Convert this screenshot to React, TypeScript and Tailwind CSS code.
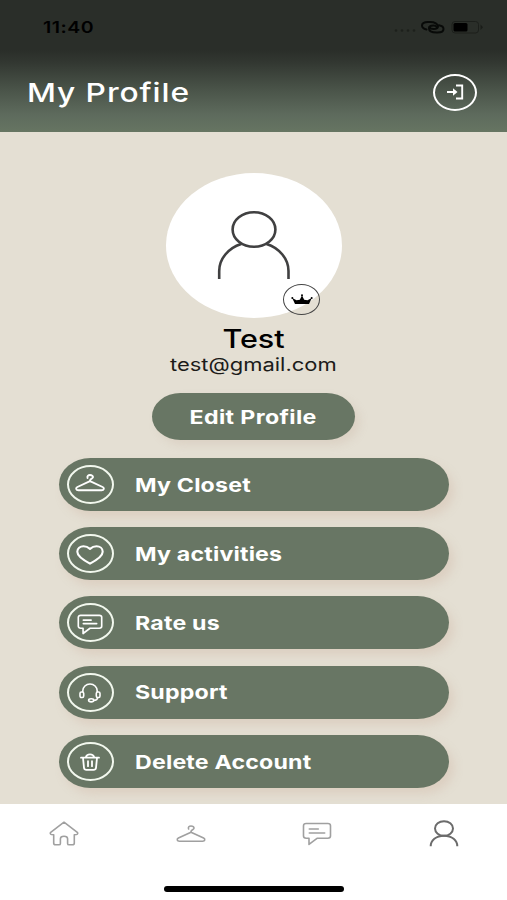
import type { ReactNode } from 'react';

interface IconProps {
  className?: string;
}

interface MenuItem {
  label: string;
  icon: ReactNode;
}

function HangerIcon({ className }: IconProps) {
  return (
    <svg viewBox="0 0 30 18" fill="none" stroke="currentColor" strokeLinecap="round" strokeLinejoin="round" className={className}>
      <path d="M12.600 4C11.800 2.200 13.200 1 15 1c1.900 0 3.100 1 3 2.300-.1 1.300-2.800 1.500-2.900 3v.9" />
      <path d="M15 7.200 27.600 13c1.900 1 1.500 3.200-1 3.200H3.400c-2.500 0-2.900-2.200-1-3.200L15 7.200Z" />
    </svg>
  );
}

function ChatIcon({ className }: IconProps) {
  return (
    <svg viewBox="0 0 30 24" fill="none" stroke="currentColor" strokeLinecap="round" strokeLinejoin="round" className={className}>
      <path d="M4.200 1.500h21.600c1.600 0 2.700.9 2.700 2.200v10.400c0 1.300-1.100 2.200-2.700 2.200H15L7 22.400v-6.100H4.200c-1.600 0-2.700-.9-2.700-2.200V3.700c0-1.300 1.100-2.200 2.700-2.200Z" />
      <path d="M7.300 7h9M7.300 11h15.400" />
    </svg>
  );
}

function HeartIcon({ className }: IconProps) {
  return (
    <svg viewBox="0 0 28 20" fill="none" stroke="currentColor" strokeLinejoin="round" className={className}>
      <path d="M14 18.600C9 16 1.300 12 1.300 6.800 1.300 3.500 4 1.300 7.500 1.300c2.800 0 4.700 1 6.500 2.600 1.800-1.600 3.700-2.600 6.500-2.600 3.500 0 6.200 2.200 6.200 5.500 0 5.200-7.700 9.200-12.700 11.800Z" />
    </svg>
  );
}

function HeadsetIcon({ className }: IconProps) {
  return (
    <svg viewBox="0 0 22 20" fill="none" stroke="currentColor" strokeWidth="1.600" className={className}>
      <path d="M3.800 9V7.800C3.800 4 7 1 11 1s7.200 3 7.200 6.800V9" />
      <rect x="1" y="9" width="3.700" height="5.500" rx="1.400" />
      <rect x="17.300" y="9" width="3.700" height="5.500" rx="1.400" />
      <path d="M18.600 14.500c0 1.900-1.800 2.900-4.200 2.900" />
      <ellipse cx="12.200" cy="17.300" rx="2.600" ry="1.600" />
    </svg>
  );
}

function TrashIcon({ className }: IconProps) {
  return (
    <svg viewBox="0 0 20 18" fill="none" stroke="currentColor" strokeWidth="1.800" strokeLinecap="round" strokeLinejoin="round" className={className}>
      <path d="M1 4.700h18M5.800 4.300C6.300 2.300 7.700 1.300 10 1.300s3.700 1 4.200 3M3 4.900l1 9.900c.2 1.400 1 2 2.500 2h7c1.500 0 2.300-.6 2.500-2l1-9.900M8 8.200v5M12 8.200v5" />
    </svg>
  );
}

function HomeIcon({ className }: IconProps) {
  return (
    <svg viewBox="0 0 30 25" fill="none" stroke="currentColor" strokeLinecap="round" strokeLinejoin="round" className={className}>
      <path d="M15 1.200 1.700 11.300c-.8.800-.5 2 .8 2.200l2.200.2v8.500c0 1 .7 1.600 1.900 1.600h3.300c1 0 1.500-.5 1.500-1.400v-4.600c0-1.800 1.200-2.600 3.600-2.600s3.600.8 3.600 2.600v4.600c0 .9.500 1.400 1.500 1.400h3.300c1.200 0 1.900-.6 1.900-1.600v-8.500l2.200-.2c1.300-.2 1.600-1.400.8-2.200L15 1.200Z" />
    </svg>
  );
}

const menuItems: MenuItem[] = [
  { label: 'My Closet', icon: <HangerIcon className="mb-[3px] h-[18px] w-[30px] stroke-[1.900]" /> },
  { label: 'My activities', icon: <HeartIcon className="mt-[2px] h-5 w-7 stroke-[2.100]" /> },
  { label: 'Rate us', icon: <ChatIcon className="mt-[3px] h-[21px] w-[26px] stroke-[1.900]" /> },
  { label: 'Support', icon: <HeadsetIcon className="mt-px h-5 w-[22px]" /> },
  { label: 'Delete Account', icon: <TrashIcon className="mt-[2px] h-[18px] w-5" /> },
];

function StatusBar() {
  return (
    <div className="flex h-[54px] items-center justify-between pl-[43px] pr-[23px] text-black">
      <span className="origin-left scale-x-[1.22] text-base font-semibold tracking-[0.4px]">11:40</span>
      <svg width="92" height="16" viewBox="0 0 92 16" fill="none">
        <g fill="#1d201c">
          <circle cx="4" cy="11.500" r="1.300" />
          <circle cx="10" cy="11.500" r="1.300" />
          <circle cx="16" cy="11.500" r="1.300" />
          <circle cx="22" cy="11.500" r="1.300" />
        </g>
        <g stroke="#080a08" strokeWidth="2" strokeLinecap="round">
          <path d="M34.500 10.500c-3-.7-4.500-2.400-4.500-4C30 4.300 32.500 3 36 3h2c5 0 8 2 8 4.200 0 1.700-2 2.800-4.500 2.800-2 0-3.500-.8-4-1.800" />
          <path d="M47 6.300c3 .5 4.500 2 4.500 3.700 0 2.200-2.500 3.500-6 3.500h-1c-5 0-7.500-2-7.500-4s2-3.100 4.300-3.100c2 0 3.200.8 3.700 1.800" />
        </g>
        <rect x="60" y="2.500" width="26.500" height="11.500" rx="3" stroke="#1c1f1b" />
        <rect x="61.500" y="4" width="14" height="8.500" rx="1.500" fill="black" />
        <path d="M88.500 5.500v5.500l2.500-2.700Z" fill="#1a1d19" />
      </svg>
    </div>
  );
}

function Header() {
  return (
    <header className="h-[132px] bg-[linear-gradient(to_bottom,#2a2e29_0px,#2a2e29_50px,#323731_62px,#4b554a_91px,#5e6b5d_115px,#667562_132px)]">
      <StatusBar />
      <div className="flex h-[76px] items-center justify-between pl-[27px] pr-[30px] text-white">
        <h1 className="origin-left scale-x-[1.22] text-[26px] font-medium tracking-[0.75px]">My Profile</h1>
        <button className="flex h-[37px] w-[44px] items-center justify-center rounded-[50%] border-2 border-white">
          <svg width="18" height="16" viewBox="0 0 18 16" fill="none" stroke="currentColor" strokeWidth="1.900">
            <path d="M1 8h8M10 1.500h6.200v13H10" />
            <path d="M7 4.300 11.500 8 7 11.700Z" fill="currentColor" stroke="none" />
          </svg>
        </button>
      </div>
    </header>
  );
}

function Avatar() {
  return (
    <div className="relative ml-px h-[145px] w-[176px] rounded-[50%] bg-white">
      <svg width="176" height="145" viewBox="0 0 176 145" fill="none" stroke="#404041" strokeWidth="2.600">
        <ellipse cx="88" cy="56.500" rx="21.400" ry="17.300" />
        <path d="M53.200 106V98c0-12 9-23 22-27M100.500 71c13 4 22 15 22 27v8" />
      </svg>
      <div className="absolute left-[117px] top-[111px] flex h-[31px] w-[37px] items-center justify-center rounded-[50%] border-[1.500px] border-[#444]">
        <svg width="22" height="11" viewBox="0 0 22 11" fill="black">
          <path d="M1.200 4 5.500 6.300l3.300-.5L10.700 2h.6l1.900 3.800 3.300.5L20.800 4 18 10H4Z" />
          <circle cx="1.300" cy="4" r="1" />
          <circle cx="11" cy="1.200" r="1" />
          <circle cx="20.700" cy="4" r="1" />
        </svg>
      </div>
    </div>
  );
}

function TabBar() {
  return (
    <nav className="flex h-24 flex-col items-center bg-white">
      <div className="grid h-[59px] w-full grid-cols-4 place-items-center pl-px text-[#a0a0a0]">
        <HomeIcon className="h-[25px] w-[30px] stroke-[1.600]" />
        <HangerIcon className="h-[18px] w-[30px] stroke-[1.600]" />
        <ChatIcon className="h-6 w-[30px] stroke-[1.600]" />
        <svg width="30" height="27" viewBox="0 0 30 27" fill="none" stroke="#6b6b6b" strokeWidth="2">
          <ellipse cx="15" cy="8.500" rx="9" ry="7.300" />
          <path d="M1.700 26.200C1.700 20.500 7 15.700 15 15.700s13.300 4.800 13.300 10.500" />
        </svg>
      </div>
      <div className="mt-[23px] ml-px h-[6px] w-[180px] rounded-full bg-black" />
    </nav>
  );
}

export default function App() {
  return (
    <div className="flex h-[900px] w-[507px] flex-col overflow-hidden bg-[#e4dfd3] font-[Inter,sans-serif]">
      <Header />
      <main className="flex flex-1 flex-col items-center pt-[41px]">
        <Avatar />
        <h2 className="mt-[5px] scale-x-[1.22] text-[25px] leading-8 font-medium text-black">Test</h2>
        <p className="scale-x-[1.22] text-lg leading-5 text-[#1c1b19]">test@gmail.com</p>
        <button className="mt-[18px] flex h-[47px] w-[203px] items-center justify-center rounded-[29px/24px] bg-[#687664] pt-[3px] text-white shadow-[5px_5px_9px_rgba(190,165,145,0.22)]">
          <span className="scale-x-[1.22] text-[19px] font-bold tracking-[0.3px]">Edit Profile</span>
        </button>
        <ul className="mt-[18px] flex w-[390px] flex-col gap-[16.200px]">
          {menuItems.map((item) => (
            <li
              key={item.label}
              className="flex h-[53px] items-center rounded-[32px/27px] bg-[#687664] pl-2 text-white shadow-[5px_6px_10px_rgba(200,165,145,0.25)]"
            >
              <span className="flex h-[39px] w-[47px] items-center justify-center rounded-[50%] border-2 border-[#f2f8ee]">
                {item.icon}
              </span>
              <span className="mt-[3px] ml-[21px] origin-left scale-x-[1.22] text-[19px] font-bold tracking-[0.15px]">
                {item.label}
              </span>
            </li>
          ))}
        </ul>
      </main>
      <TabBar />
    </div>
  );
}
